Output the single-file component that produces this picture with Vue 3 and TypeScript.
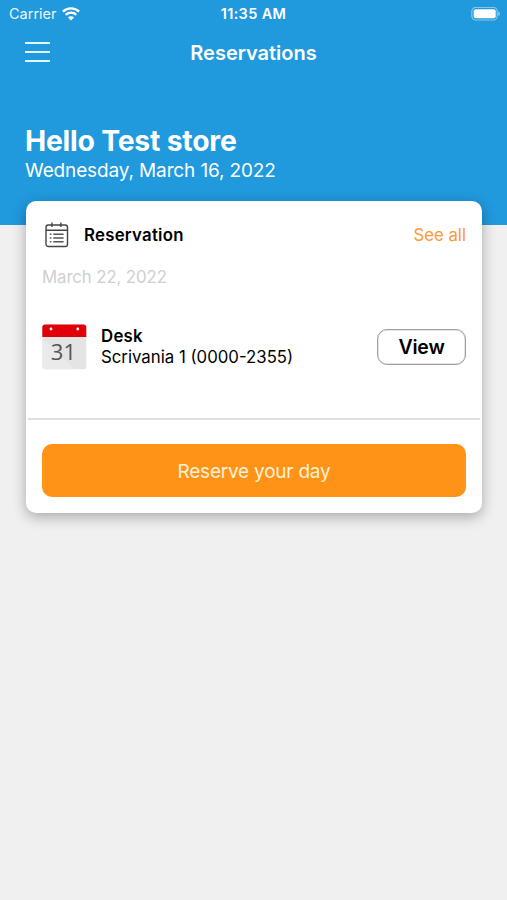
<script setup lang="ts">
interface Reservation {
  kind: string
  place: string
  date: string
}

const store = 'Hello Test store'
const today = 'Wednesday, March 16, 2022'
const reservation: Reservation = {
  kind: 'Desk',
  place: 'Scrivania 1 (0000-2355)',
  date: 'March 22, 2022',
}
</script>

<template>
  <div class="screen">
    <header class="header">
      <div class="status">
        <div class="carrier">
          <span class="carrier-name">Carrier</span>
          <svg class="wifi" width="18" height="14" viewBox="0 0 18 14">
            <path d="M.9 4.6C5.4 .3 12.6 .3 17.1 4.6" />
            <path d="M3.7 7.8C6.8 5 11.2 5 14.3 7.8" />
            <path class="dot" d="M6 10.4C7.7 9 10.3 9 12 10.4L9 13.6Z" />
          </svg>
        </div>
        <span class="time">11:35 AM</span>
        <svg class="battery" width="30" height="14" viewBox="0 0 30 14">
          <rect class="shell" x=".8" y=".4" width="25.4" height="12.6" rx="4" />
          <rect class="charge" x="2.7" y="2.2" width="22" height="9" rx="2" />
          <path class="cap" d="M27.3 4.5C29.6 5.3 29.6 8.1 27.3 8.9Z" />
        </svg>
      </div>
      <nav class="nav">
        <button class="menu" aria-label="Menu"><i></i><i></i><i></i></button>
        <h1 class="title">Reservations</h1>
      </nav>
      <div class="greeting">
        <h2 class="hello">{{ store }}</h2>
        <p class="today">{{ today }}</p>
      </div>
    </header>

    <main class="card">
      <div class="card-head">
        <svg class="list-icon" width="24" height="26" viewBox="0 0 24 26">
          <rect x="1" y="3" width="21.5" height="21.5" rx="2.2" />
          <path d="M1 8.3H22.5M6.9 .4V5M15.9 .4V5" />
          <path class="rows" d="M8.3 12.3H18.6M8.3 16H18.6M8.3 19.7H18.6" />
          <path class="rows" d="M4.8 12.3H6.4M4.8 16H6.4M4.8 19.7H6.4" />
        </svg>
        <span class="card-title">Reservation</span>
        <a class="see-all">See all</a>
      </div>
      <p class="date">{{ reservation.date }}</p>
      <div class="item">
        <svg class="calendar" width="45" height="46" viewBox="0 0 45 46">
          <rect x=".3" y=".5" width="44" height="44.8" rx="3" fill="#e4e4e4" />
          <path d="M.3 13V42.3A3 3 0 0 0 3.3 45.3H32.5Z" fill="#efefef" opacity=".6" />
          <path d="M.3 13V3.5A3 3 0 0 1 3.3 .5H41.3A3 3 0 0 1 44.3 3.5V13Z" fill="#e00008" />
          <circle cx="9" cy="5" r="1.4" fill="#fff" />
          <circle cx="35.8" cy="5" r="1.4" fill="#fff" />
          <text class="day" x="21.4" y="35.5" text-anchor="middle">31</text>
        </svg>
        <div class="details">
          <strong class="kind">{{ reservation.kind }}</strong>
          <span class="place">{{ reservation.place }}</span>
        </div>
        <button class="view">View</button>
      </div>
      <hr class="divider" />
      <button class="reserve">Reserve your day</button>
    </main>
  </div>
</template>

<style>
body {
  background: #f0f0f0;
}
</style>

<style scoped>
.screen {
  min-height: 900px;
  background: #f0f0f0;
  font-family: Inter, "Liberation Sans", sans-serif;
  color: #000;
}
h1, h2, p {
  margin: 0;
  font-weight: 400;
}
button {
  padding: 0;
  border: 0;
  background: none;
  font: inherit;
  color: inherit;
}
.header {
  box-sizing: border-box;
  height: 225px;
  background: #2099dd;
  color: #fff;
}
.status {
  display: grid;
  grid-template-columns: 1fr auto 1fr;
  align-items: center;
  height: 27px;
  padding: 0 6px 0 9px;
}
.carrier {
  display: flex;
  align-items: center;
  gap: 5px;
}
.carrier-name {
  font-size: 14.5px;
  opacity: 0.92;
}
.wifi {
  fill: none;
  stroke: #fff;
  stroke-width: 2.4;
}
.wifi .dot {
  fill: #fff;
  stroke: none;
}
.time {
  margin-right: 3px;
  font-size: 14.5px;
  letter-spacing: 0.36px;
  font-weight: 600;
}
.battery {
  justify-self: end;
}
.shell {
  fill: none;
  stroke: #fff;
  stroke-opacity: 0.45;
  stroke-width: 1.2;
}
.charge {
  fill: #fff;
}
.cap {
  fill: #fff;
  opacity: 0.5;
}
.nav {
  display: grid;
  grid-template-columns: 1fr auto 1fr;
  align-items: center;
  height: 50px;
  padding: 0 25px;
}
.menu {
  display: flex;
  flex-direction: column;
  gap: 7px;
  width: 25px;
}
.menu i {
  height: 2px;
  background: #e0f7ff;
}
.title {
  padding-top: 2px;
  font-size: 20px;
  font-weight: 600;
}
.greeting {
  padding: 47px 25px 0;
}
.hello {
  font-size: 28.3px;
  line-height: 34px;
  letter-spacing: -0.2px;
  font-weight: 700;
}
.today {
  font-size: 19px;
  line-height: 26px;
  letter-spacing: -0.13px;
}
.card {
  position: relative;
  box-sizing: border-box;
  width: 456px;
  height: 312px;
  margin: -24px 0 0 26px;
  padding: 19px 16px 0;
  border-radius: 10px;
  background: #fff;
  box-shadow: 0 4px 14px rgba(0, 0, 0, 0.3);
}
.card-head {
  display: flex;
  align-items: center;
  height: 30px;
  padding-left: 3px;
}
.list-icon {
  fill: none;
  stroke: #444;
  stroke-width: 1.4;
}
.rows {
  stroke-width: 1.5;
  stroke: #555;
}
.card-title {
  margin-left: 15px;
  font-size: 16.8px;
  letter-spacing: 0.26px;
  font-weight: 600;
}
.see-all {
  margin-left: auto;
  font-size: 16.8px;
  color: #fb9a33;
}
.date {
  margin-top: 15px;
  font-size: 16.8px;
  line-height: 24px;
  letter-spacing: -0.1px;
  color: #cfcfcf;
}
.item {
  display: flex;
  align-items: center;
  height: 46px;
  margin-top: 35px;
}
.details {
  display: flex;
  flex-direction: column;
  margin-left: 14px;
  font-size: 16.8px;
  line-height: 21px;
}
.kind {
  letter-spacing: 0.26px;
  font-weight: 600;
}
.day {
  font-family: "Open Sans", sans-serif;
  font-size: 22px;
  fill: #555;
}
.view {
  box-sizing: border-box;
  width: 89px;
  height: 36px;
  margin-left: auto;
  border: 1px solid #a0a0a0;
  border-radius: 10px;
  box-shadow: inset 0 0 0 0.5px #c8c8c8;
  font-size: 19.5px;
  letter-spacing: -0.2px;
  font-weight: 600;
}
.divider {
  height: 2px;
  margin: 48px -14px 24px;
  border: 0;
  background: #e0e0e0;
}
.reserve {
  box-sizing: border-box;
  width: 100%;
  height: 53px;
  padding-top: 2px;
  border-radius: 10px;
  background: #ff9317;
  color: #fff1d8;
  font-size: 19px;
  letter-spacing: -0.22px;
}
</style>
